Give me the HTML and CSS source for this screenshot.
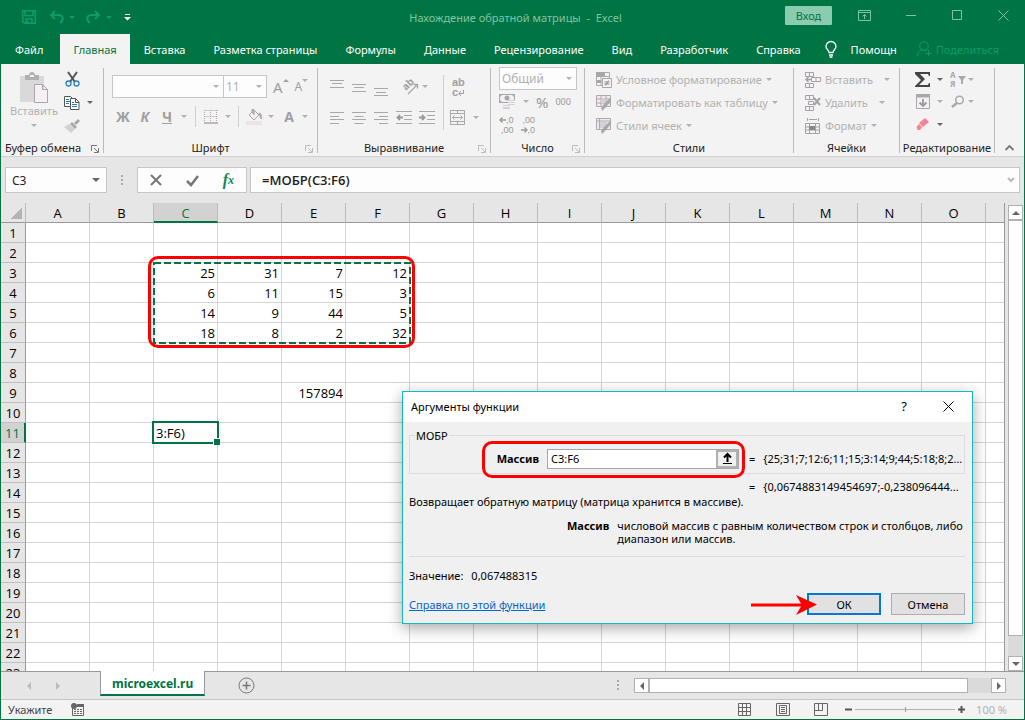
FILE: index.html
```html
<!DOCTYPE html>
<html lang="ru">
<head>
    <meta charset="UTF-8">
    <meta name="viewport" content="width=device-width, initial-scale=1.0">
    <title>Нахождение обратной матрицы - Excel</title>
    <link rel="stylesheet" href="styles.css">
</head>
<body>
    <header class="titlebar">
        <div class="quick-access">
            <button aria-label="Сохранить"><svg width="14" height="14" viewBox="0 0 14 14" fill="none" stroke="currentColor" stroke-width="1.5"><path d="M.75.75h12.500v12.500H2.500l-1.750-1.500zM3 1v4.500h8V1M4 13V9h6v4M6 11v2"/></svg></button>
            <button aria-label="Отменить"><svg width="15" height="14" viewBox="0 0 15 14" fill="none" stroke="currentColor" stroke-width="2"><path d="M6 1L2 5l4 4M2 5h7c6 0 6 5 2 8"/></svg></button>
            <span class="caret"></span>
            <button class="redo" aria-label="Вернуть"><svg width="15" height="14" viewBox="0 0 15 14" fill="none" stroke="currentColor" stroke-width="2"><path d="M9 1l4 4-4 4M13 5H6C0 5 0 10 4 13"/></svg></button>
            <span class="caret"></span>
            <button class="customize" aria-label="Настройка панели"><svg width="7" height="7" viewBox="0 0 7 7" fill="#fff"><path d="M1 0h5v1H1zM0 3h7L3.500 6.500z"/></svg></button>
        </div>
        <div class="doc-title">Нахождение обратной матрицы&nbsp; -&nbsp; Excel</div>
        <div class="window-buttons">
            <button class="login">Вход</button>
            <button aria-label="Параметры ленты"><svg width="13" height="11" viewBox="0 0 13 11" fill="none" stroke="currentColor"><path d="M.5.5h12v10H.5zM.5 2.500h12M6.500 9V4.500M4.500 6.500l2-2 2 2"/></svg></button>
            <button aria-label="Свернуть"><svg width="11" height="11" viewBox="0 0 11 11" stroke="currentColor"><path d="M0 5.500h10"/></svg></button>
            <button aria-label="Развернуть"><svg width="11" height="11" viewBox="0 0 11 11" fill="none" stroke="currentColor"><path d="M.5.5h9v9h-9z"/></svg></button>
            <button aria-label="Закрыть"><svg width="11" height="11" viewBox="0 0 11 11" stroke="currentColor"><path d="M.5.5l10 10M10.500.5l-10 10"/></svg></button>
        </div>
    </header>

    <nav class="tabs">
        <a href="#">Файл</a>
        <a href="#" class="active">Главная</a>
        <a href="#">Вставка</a>
        <a href="#">Разметка страницы</a>
        <a href="#">Формулы</a>
        <a href="#">Данные</a>
        <a href="#">Рецензирование</a>
        <a href="#">Вид</a>
        <a href="#">Разработчик</a>
        <a href="#">Справка</a>
        <a href="#" class="help"><svg width="12" height="17" viewBox="0 0 12 17" fill="none" stroke="currentColor" stroke-width="1.300"><path d="M4 11.500C4 9 1 8.500 1 5.500a5 5 0 0 1 10 0c0 3-3 3.500-3 6zM4 14h4M4.500 16h3"/></svg>Помощн</a>
        <a href="#" class="share"><svg width="15" height="16" viewBox="0 0 15 16" fill="none" stroke="currentColor"><circle cx="7" cy="5" r="4.200"/><path d="M.5 15.500c0-4 2-6 5-6.500M8 9l2 1M11.500 9v6M8.500 12.500h6"/></svg>Поделиться</a>
    </nav>

    <section class="ribbon">
        <div class="group clipboard">
            <div class="tools">
                <button class="paste">
                    <svg width="30" height="31" viewBox="0 0 30 31"><path d="M1 4h24v26H1z" fill="#d9d9d9"/><path d="M6 3h4c0-4 6-4 6 0h4v5H6z" fill="#b1b1b1"/><path d="M11 3h4v2h-4z" fill="#f3f3f3"/><path d="M15.500 12.500h8l5 5v13h-13zM23.500 12.500v5h5" fill="#f6eff5" stroke="#a9a5a9"/></svg>
                    <span>Вставить</span>
                    <span class="caret"></span>
                </button>
                <div class="stack">
                    <button aria-label="Вырезать"><svg width="15" height="15" viewBox="0 0 15 15" fill="none"><path d="M3 0l7 10M12 0L5 10" stroke="#555" stroke-width="2"/><circle cx="3.500" cy="11.500" r="2.500" stroke="#2b7fb8" stroke-width="1.300"/><circle cx="11.500" cy="11.500" r="2.500" stroke="#2b7fb8" stroke-width="1.300"/></svg></button>
                    <button aria-label="Копировать"><svg width="16" height="14" viewBox="0 0 16 14" fill="#fff" stroke="#555"><path d="M.5.5h6l3 3v7h-9z"/><path d="M2 3.500h3M2 5.500h5M2 7.500h3" stroke="#2b7fb8"/><path d="M6.500 2.500h5l3.500 3.500v7.500H6.500zM11.500 2.500v4H15"/><path d="M8 6.500h2M8 8.500h5M8 10.500h5" stroke="#2b7fb8"/></svg><span class="caret dark"></span></button>
                    <button aria-label="Формат по образцу"><svg width="16" height="14" viewBox="0 0 16 14"><path d="M14 0l2 2-4 4-2-2zM8 3l5 5-2 2-5-5z" fill="#a8a8a8"/><path d="M5 5l6 5-4 4L0 8z" fill="#d2d2d2"/></svg></button>
                </div>
            </div>
            <div class="group-name">Буфер обмена<svg class="launcher dark" width="8" height="8" viewBox="0 0 8 8"><path d="M.5 6V.5H6M7.500 3v4.500H3M3 3l4 4" fill="none" stroke="currentColor"/></svg></div>
        </div>

        <div class="group font">
            <div class="tools">
                <div class="row combos">
                    <label class="combo name"><select aria-label="Шрифт" disabled><option></option></select></label>
                    <label class="combo size"><select aria-label="Размер" disabled><option>11</option></select></label>
                    <button class="letter big">A<i class="up"></i></button>
                    <button class="letter small">A<i class="caret"></i></button>
                </div>
                <div class="row letters">
                    <button class="letter"><b>Ж</b></button>
                    <button class="letter"><b><i>К</i></b></button>
                    <button class="letter"><b><u>Ч</u></b></button>
                    <span class="caret"></span>
                    <span class="divider"></span>
                    <button aria-label="Границы"><svg width="14" height="14" viewBox="0 0 14 14" fill="none" stroke="#b1a8b1"><path d="M.5.5h13M.5 6.500h13M.5 0v13M6.500 0v13M12.500 0v13" stroke-dasharray="1 1"/><path d="M0 13h14" stroke-width="1.500"/></svg></button>
                    <span class="caret"></span>
                    <span class="divider"></span>
                    <button aria-label="Цвет заливки"><svg width="17" height="17" viewBox="0 0 17 17"><path d="M8 2l5 5-5 5-5-5z" fill="#f6eff5" stroke="#a8a8a8"/><path d="M6 5V1.500h2V7M13 5c3 1 3 4 2 6l-1-3z" fill="#b1b1b1" stroke="#a8a8a8"/><path d="M0 13h16v4H0z" fill="#ebe4e6"/></svg></button>
                    <span class="caret"></span>
                    <button class="letter"><b>A</b></button>
                    <span class="caret"></span>
                </div>
            </div>
            <div class="group-name">Шрифт<svg class="launcher" width="8" height="8" viewBox="0 0 8 8"><path d="M.5 6V.5H6M7.500 3v4.500H3M3 3l4 4" fill="none" stroke="currentColor"/></svg></div>
        </div>

        <div class="group align">
            <div class="tools">
                <div class="align-grid">
                    <button aria-label="По верхнему краю"><svg width="14" height="18" viewBox="0 0 14 18" stroke="#a8a8a8"><path d="M0 2.500h14M2 5.500h10M0 9.500h14"/></svg></button>
                    <button aria-label="По середине"><svg width="14" height="18" viewBox="0 0 14 18" stroke="#a8a8a8"><path d="M0 6.500h14M2 9.500h10M0 13.500h14"/></svg></button>
                    <button aria-label="По нижнему краю"><svg width="14" height="18" viewBox="0 0 14 18" stroke="#a8a8a8"><path d="M0 10.500h14M2 14.500h10M0 17.500h14"/></svg></button>
                    <button class="orient" aria-label="Ориентация"><svg width="17" height="18" viewBox="0 0 17 18" fill="none" stroke="#a8a8a8"><text x="4" y="13" transform="rotate(-45 4 13)" font-size="10" font-weight="bold" fill="#a0a0a0" stroke="none">ab</text><path d="M6 16l9-9M11.500 6.500H15.500V10.500" stroke-width="1.300"/></svg><span class="caret"></span></button>
                    <span class="divider tall"></span>
                    <button class="wrap"><span>ab</span><span>c<svg width="6" height="6" viewBox="0 0 6 6"><path d="M5.500 0v3.500H1M3 1L.8 3.500 3 6" fill="none" stroke="currentColor"/></svg></span></button>
                    <button aria-label="По левому краю"><svg width="14" height="12" viewBox="0 0 14 12" stroke="#a8a8a8"><path d="M0 .5h14M0 4.500h9M0 7.500h14M0 11.500h9"/></svg></button>
                    <button aria-label="По центру"><svg width="14" height="12" viewBox="0 0 14 12" stroke="#a8a8a8"><path d="M0 .5h14M2.500 4.500h9M0 7.500h14M2.500 11.500h9"/></svg></button>
                    <button aria-label="По правому краю"><svg width="14" height="12" viewBox="0 0 14 12" stroke="#a8a8a8"><path d="M0 .5h14M5 4.500h9M0 7.500h14M5 11.500h9"/></svg></button>
                    <button aria-label="Уменьшить отступ"><svg width="16" height="13" viewBox="0 0 16 13" stroke="#a8a8a8" fill="none"><path d="M0 .5h16M8 4.500h8M8 8.500h8M0 12.500h16"/><path d="M7 6.500H1.500M4 4L1.500 6.500 4 9" stroke="#999" stroke-width="1.800"/></svg></button>
                    <button aria-label="Увеличить отступ"><svg width="16" height="13" viewBox="0 0 16 13" stroke="#a8a8a8" fill="none"><path d="M0 .5h16M8 4.500h8M8 8.500h8M0 12.500h16"/><path d="M0 6.500h5.500M3 4l2.500 2.500L3 9" stroke="#999" stroke-width="1.800"/></svg></button>
                    <button class="merge" aria-label="Объединить"><svg width="16" height="15" viewBox="0 0 16 15" fill="none" stroke="#a8a8a8"><path d="M.5.5h14v14H.5zM.5 3.500h14M.5 11.500h14M7.500.5v3M7.500 11.500v3M2.500 7.500h10M4.500 5.500l-2 2 2 2M10.500 5.500l2 2-2 2"/></svg><span class="caret"></span></button>
                </div>
            </div>
            <div class="group-name">Выравнивание<svg class="launcher" width="8" height="8" viewBox="0 0 8 8"><path d="M.5 6V.5H6M7.500 3v4.500H3M3 3l4 4" fill="none" stroke="currentColor"/></svg></div>
        </div>

        <div class="group number">
            <div class="tools">
                <label class="combo"><select aria-label="Формат числа" disabled><option>Общий</option></select></label>
                <div class="row">
                    <button aria-label="Денежный формат"><svg width="17" height="15" viewBox="0 0 17 15"><path d="M.5.5h15v8H.5z" fill="#f6eff5" stroke="#a8a8a8"/><path d="M0 0h4L0 4zM16 0h-4l4 4zM0 9V5l4 4z" fill="#a8a8a8"/><circle cx="8" cy="4" r="2.500" fill="#a8a8a8"/><path d="M9 6h7v5H9zM4 11h7v4H4z" fill="#d2d2d2"/><path d="M9 7.500h7M9 9.500h7M4 12.500h7" stroke="#f3f3f3"/></svg></button>
                    <span class="caret"></span>
                    <button class="percent">%</button>
                    <button class="zeros">000</button>
                </div>
                <div class="row">
                    <button class="digits"><span><svg width="7" height="6" viewBox="0 0 7 6"><path d="M7 3H1M3.500.5L1 3l2.500 2.500" fill="none" stroke="currentColor" stroke-width="1.300"/></svg>,0</span><span>,00</span></button>
                    <button class="digits"><span>,00</span><span><svg width="7" height="6" viewBox="0 0 7 6"><path d="M0 3h6M3.500.5L6 3 3.500 5.500" fill="none" stroke="currentColor" stroke-width="1.300"/></svg>,0</span></button>
                </div>
            </div>
            <div class="group-name">Число<svg class="launcher" width="8" height="8" viewBox="0 0 8 8"><path d="M.5 6V.5H6M7.500 3v4.500H3M3 3l4 4" fill="none" stroke="currentColor"/></svg></div>
        </div>

        <div class="group styles">
            <div class="tools list">
                <button><svg width="16" height="16" viewBox="0 0 16 16"><path d="M.5.5h13v13H.5zM.5 4.500h13M.5 9.500h13M5 .5v13" fill="none" stroke="#b1a8b1"/><path d="M0 0h9v5H0zM0 8h5v3H0z" fill="#a8a8a8"/><path d="M6.500 6.500h9v9h-9z" fill="#f8f2f7" stroke="#a8a8a8"/><path d="M8.500 10h5M8.500 12h5M12.500 8.500l-3 5" stroke="#888"/></svg>Условное форматирование<span class="caret"></span></button>
                <button><svg width="16" height="16" viewBox="0 0 16 16"><path d="M.5.5h14v11H.5zM.5 4h14M.5 8h14M5 .5v11M10 .5v11" fill="#f0eaf0" stroke="#b1a8b1"/><path d="M5 4h5v4H5z" fill="#d2d2d2"/><path d="M15 2v4l-5 6-4 4-1-3 3-4z" fill="#a8a8a8"/></svg>Форматировать как таблицу<span class="caret"></span></button>
                <button><svg width="16" height="16" viewBox="0 0 16 16"><path d="M.5.5h14v11H.5zM.5 3h14M3.500 .5v11" fill="#f0eaf0" stroke="#b1a8b1"/><path d="M4 4h7v6H4z" fill="#d2d2d2"/><path d="M15 2v4l-5 6-4 4-1-3 3-4z" fill="#a8a8a8"/></svg>Стили ячеек<span class="caret"></span></button>
            </div>
            <div class="group-name">Стили</div>
        </div>

        <div class="group cells">
            <div class="tools list">
                <button><svg width="16" height="16" viewBox="0 0 16 16" fill="none" stroke="#a8a0a8"><path d="M.5.5h8v4h-8zM4.500.5v4M.5 11.500h8v4h-8zM4.500 11.500v4M6.500 5.500h9v4h-9zM11 5.500v4"/><path d="M6 7.500H1M3.500 5L1 7.500 3.500 10" stroke-width="1.500"/></svg>Вставить<span class="caret far"></span></button>
                <button><svg width="16" height="16" viewBox="0 0 16 16" fill="none" stroke="#a8a0a8"><path d="M.5.5h8v4h-8zM4.500.5v4M.5 11.500h8v4h-8zM4.500 11.500v4M3.500 6.500h5v3h-5z"/><path d="M9 3l6 7M15 3l-6 7" stroke-width="2"/></svg>Удалить<span class="caret far"></span></button>
                <button><svg width="16" height="16" viewBox="0 0 16 16" fill="none" stroke="#a8a0a8"><path d="M2.500 0v3M13.500 0v3M4 1.500h8M.5 5.500h14v10H.5zM.5 9h14M.5 12h14M4.500 5.500v10M10.500 5.500v10"/><path d="M4 8h6v4H4z" fill="#888" stroke="none"/></svg>Формат<span class="caret"></span></button>
            </div>
            <div class="group-name">Ячейки</div>
        </div>

        <div class="group editing">
            <div class="tools">
                <button aria-label="Сумма"><svg width="16" height="15" viewBox="0 0 16 15"><path d="M0 0h15v4h-1l-1-2H5l5 5-6 6h9l1-2h1v4H0v-1l6-6-6-6z" fill="#444"/></svg></button><span class="caret dark"></span>
                <button aria-label="Сортировка"><svg width="16" height="17" viewBox="0 0 16 17"><text x="0" y="7" font-size="8" font-weight="bold" fill="#a8a8a8">А</text><text x="0" y="16" font-size="8" font-weight="bold" fill="#a8a8a8">Я</text><path d="M8 5h8l-3 4v4h-2V9z" fill="#a8a8a8"/></svg></button><span class="caret"></span>
                <button aria-label="Заполнить"><svg width="15" height="15" viewBox="0 0 15 15" fill="none" stroke="#a8a8a8"><path d="M.5.5h13v14H.5z" fill="#f6eff5"/><path d="M0 2h14" stroke-width="3"/><path d="M7 5v7M3.500 8.500L7 12l3.500-3.500" stroke="#999" stroke-width="1.800"/></svg></button><span class="caret"></span>
                <button aria-label="Найти"><svg width="14" height="13" viewBox="0 0 14 13" fill="none" stroke="#a8a8a8"><circle cx="8.500" cy="5" r="3.800" stroke-width="1.500"/><path d="M6 8l-5 4" stroke-width="2.500"/></svg></button><span class="caret"></span>
                <button aria-label="Очистить"><svg width="14" height="13" viewBox="0 0 14 13"><path d="M9 0l4 4-6 5-4-4z" fill="#f88493"/><path d="M3 6l3 3-2 3H1.500L.5 9z" fill="#f88493"/></svg></button><span class="caret dark"></span>
            </div>
            <div class="group-name">Редактирование</div>
        </div>
        <button class="collapse" aria-label="Свернуть ленту"><svg width="9" height="6" viewBox="0 0 9 6"><path d="M.5 5l4-4 4 4" fill="none" stroke="#777" stroke-width="1.800"/></svg></button>
    </section>

    <section class="formula-bar">
        <div class="name-box"><input type="text" value="C3" aria-label="Имя"><span class="caret dark"></span></div>
        <span class="dots"></span>
        <div class="formula-buttons">
            <button aria-label="Отмена"><svg width="12" height="12" viewBox="0 0 12 12"><path d="M1 1l10 10M11 1L1 11" stroke="#777" stroke-width="2"/></svg></button>
            <button aria-label="Ввод"><svg width="13" height="11" viewBox="0 0 13 11"><path d="M1 6l4 4 7-9" fill="none" stroke="#777" stroke-width="2.500"/></svg></button>
            <button class="fx">f<small>x</small></button>
        </div>
        <div class="formula-input"><input type="text" value="=МОБР(C3:F6)" aria-label="Формула"><svg width="8" height="6" viewBox="0 0 8 6"><path d="M1 1l3 3 3-3" fill="none" stroke="#bbb" stroke-width="2"/></svg></div>
    </section>

    <main class="workspace">
        <div class="sheet">
            <table class="cells-table">
                <thead><tr id="columns"><th class="corner"></th></tr></thead>
                <tbody id="rows"></tbody>
            </table>
            <svg class="ants" width="258" height="82" aria-hidden="true"><rect x="1" y="1" width="256" height="80" fill="none" stroke="#0a7044" stroke-width="2" stroke-dasharray="7 3"/></svg>
            <div class="mark range-mark"></div>
            <div class="cell-cursor"></div>
        </div>
        <div class="scroll vertical">
            <button aria-label="Вверх"><i class="up"></i></button>
            <div class="thumb"></div>
            <button aria-label="Вниз"><i class="caret dark"></i></button>
        </div>
    </main>

    <footer class="sheet-bar">
        <div class="sheet-nav"><i class="left"></i><i class="right"></i></div>
        <a href="#" class="sheet-tab">microexcel.ru</a>
        <button class="add" aria-label="Новый лист"><svg width="17" height="17" viewBox="0 0 17 17" fill="none" stroke="#777"><circle cx="8.500" cy="8.500" r="7.500"/><path d="M8.500 4.500v8M4.500 8.500h8" stroke-width="1.500"/></svg></button>
        <span class="dots"></span>
        <div class="scroll horizontal">
            <button aria-label="Влево"><i class="left"></i></button>
            <div class="thumb"></div>
            <button aria-label="Вправо"><i class="right"></i></button>
        </div>
    </footer>

    <footer class="status">
        <span>Укажите</span>
        <svg width="14" height="13" viewBox="0 0 14 13"><path d="M1.500 4v8.500h11V1.500H6" fill="none" stroke="#666"/><path d="M6 1h7v3H6z" fill="#666"/><circle cx="3" cy="3" r="3" fill="#666"/><path d="M3 6.500h9M3 8.500h9M3 10.500h9" stroke="#666" stroke-dasharray="2 1"/></svg>
        <div class="views">
            <button aria-label="Обычный"><svg width="14" height="13" viewBox="0 0 14 13" fill="none" stroke="#666"><path d="M.5.5h12v12H.5zM4.500.5v12M8.500.5v12M.5 4.500h12M.5 8.500h12"/></svg></button>
            <button aria-label="Разметка страницы"><svg width="14" height="13" viewBox="0 0 14 13" fill="none" stroke="#666"><path d="M.5.5h13v12H.5zM3.500 2.500h7v8h-7zM5 4.500h4M5 6.500h4M5 8.500h4"/></svg></button>
            <button aria-label="Страничный режим"><svg width="14" height="13" viewBox="0 0 14 13" fill="none" stroke="#666"><path d="M.5.5h13v12H.5zM4.500.5v7M8.500.5v7M.5 7.500h8"/></svg></button>
        </div>
        <button class="zoom-button" aria-label="Уменьшить"><svg width="7" height="7" viewBox="0 0 7 7"><path d="M0 3.500h7" stroke="#555" stroke-width="2"/></svg></button>
        <input class="zoom" type="range" min="10" max="190" value="100" aria-label="Масштаб">
        <button class="zoom-button" aria-label="Увеличить"><svg width="7" height="7" viewBox="0 0 7 7"><path d="M0 3.500h7M3.500 0v7" stroke="#555" stroke-width="2"/></svg></button>
        <span class="zoom-value">100 %</span>
    </footer>

    <form class="dialog">
        <div class="dialog-title">
            <span>Аргументы функции</span>
            <button type="button">?</button>
            <button type="button" aria-label="Закрыть"><svg width="11" height="11" viewBox="0 0 11 11" stroke="#000"><path d="M.5.5l10 10M10.500.5l-10 10"/></svg></button>
        </div>
        <div class="dialog-body">
            <fieldset>
                <legend>МОБР</legend>
                <div class="argument">
                    <label for="array">Массив</label>
                    <div class="ref-input">
                        <input type="text" id="array" value="C3:F6">
                        <button type="button" aria-label="Свернуть диалог"><svg width="9" height="11" viewBox="0 0 9 11"><path d="M4.500 9V2M1 4.500L4.500 1 8 4.500" fill="none" stroke="#000" stroke-width="2"/><path d="M0 10.500h9" stroke="#000"/></svg></button>
                    </div>
                    <div class="mark field-mark"></div>
                </div>
                <span>=</span>
                <output>{25;31;7;12:6;11;15;3:14;9;44;5:18;8;2...</output>
            </fieldset>
            <div class="result"><span>=</span><output>{0,0674883149454697;-0,238096444...</output></div>
            <p class="about">Возвращает обратную матрицу (матрица хранится в массиве).</p>
            <dl>
                <dt>Массив</dt>
                <dd>числовой массив с равным количеством строк и столбцов, либо диапазон или массив.</dd>
            </dl>
            <p class="value"><span>Значение:</span><output>0,067488315</output></p>
            <div class="dialog-footer">
                <a href="#">Справка по этой функции</a>
                <button type="button" class="ok">ОК<svg class="arrow" width="66" height="20" viewBox="0 0 66 20" aria-hidden="true"><path d="M0 8.500h50L45 0l21 9.500L45 20l5-8.500H0z" fill="#f00"/></svg></button>
                <button type="button">Отмена</button>
            </div>
        </div>
    </form>

    <script>
        const columns = 'ABCDEFGHIJKLMNO'.split('').concat('');
        const values = {
            C3: 25, D3: 31, E3: 7, F3: 12,
            C4: 6, D4: 11, E4: 15, F4: 3,
            C5: 14, D5: 9, E5: 44, F5: 5,
            C6: 18, D6: 8, E6: 2, F6: 32,
            E9: 157894,
            C11: '3:F6)'
        };

        columns.forEach(name => {
            const th = document.createElement('th');
            th.textContent = name;
            if (name === 'C') th.className = 'current';
            if (!name) th.className = 'rest';
            document.getElementById('columns').appendChild(th);
        });

        for (let row = 1; row <= 23; row++) {
            let html = `<th${row === 11 ? ' class="current"' : ''}>${row}</th>`;
            columns.forEach(name => {
                const value = values[name + row];
                html += `<td${isNaN(value) && value ? ' class="text"' : ''}>${value || ''}</td>`;
            });
            const tr = document.createElement('tr');
            tr.innerHTML = html;
            document.getElementById('rows').appendChild(tr);
        }
    </script>
</body>
</html>
```

FILE: styles.css
```css
* {
    box-sizing: border-box;
}
body {
    display: flex;
    flex-direction: column;
    height: 100vh;
    margin: 0;
    border: 1px solid #007443;
    border-top: none;
    overflow: hidden;
    background-color: #e6e6e6;
    font-family: "Noto Sans", "Open Sans", sans-serif;
    font-size: 11px;
    color: #222;
}
button, input, select {
    font: inherit;
    color: inherit;
    margin: 0;
    padding: 0;
    border: none;
    background: none;
}
button {
    display: flex;
    align-items: center;
    justify-content: center;
}
svg {
    display: block;
    flex: none;
    overflow: visible;
}
a {
    color: inherit;
    text-decoration: none;
}
.caret, .up, .left, .right {
    flex: none;
    width: 0;
    height: 0;
    border: 3px solid transparent;
}
.caret {
    border-top-color: #b1b1b1;
    border-bottom: none;
}
.caret.dark {
    border-top-color: #666;
}
.up {
    border-bottom-color: #666;
    border-top: none;
}
.left {
    border-width: 4px;
    border-right-color: #666;
    border-left: none;
}
.right {
    border-width: 4px;
    border-left-color: #666;
    border-right: none;
}
.dots {
    width: 2px;
    height: 11px;
    background: repeating-linear-gradient(#aaa 0 2px, transparent 2px 4px);
}

/* title bar */
.titlebar {
    display: flex;
    align-items: center;
    height: 34px;
    background-color: #007443;
    color: #7fc4a2;
}
.quick-access {
    display: flex;
    flex: 1;
    align-items: center;
    gap: 5px;
    padding-left: 21px;
    color: #0d9b69;
}
.quick-access button:first-child {
    margin-right: 8px;
}
.quick-access .caret {
    border-top-color: #0d9b69;
}
.quick-access .redo {
    margin-left: 6px;
}
.quick-access .customize {
    margin-left: 7px;
}
.window-buttons {
    display: flex;
    flex: 1;
    justify-content: flex-end;
    align-items: center;
    padding-right: 15px;
    padding-bottom: 4px;
}
.window-buttons button + button {
    margin-left: 35px;
}
.window-buttons .login + button {
    margin-left: 26px;
}
.login {
    width: 47px;
    height: 19px;
    border-radius: 1px;
    background-color: #8bcbb0;
    color: #007443;
}

/* ribbon tabs */
.tabs {
    display: flex;
    height: 30px;
    background-color: #007443;
    color: #fff;
    white-space: nowrap;
}
.tabs a {
    display: flex;
    align-items: center;
    padding: 0 14px;
}
.tabs .active {
    margin-left: 3px;
    padding: 0 13px;
    background-color: #f3f3f3;
    color: #007443;
}
.tabs .help {
    gap: 14px;
    padding: 0 10px;
}
.tabs .share {
    gap: 4px;
    padding: 0 10px;
    color: #0d9b69;
}

/* ribbon */
.ribbon {
    display: flex;
    height: 93px;
    padding: 4px 0 3px;
    border-bottom: 1px solid #d0d0d0;
    background-color: #f3f3f3;
    color: #b1b1b1;
}
.group {
    display: flex;
    flex-direction: column;
    flex: none;
    border-right: 1px solid #bababa;
    white-space: nowrap;
}
.tools {
    flex: 1;
}
.group-name {
    display: flex;
    align-items: center;
    justify-content: center;
    position: relative;
    height: 12px;
    color: #222;
}
.launcher {
    position: absolute;
    right: 4px;
    bottom: 0;
    color: #bbb;
}
.launcher.dark {
    color: #777;
}
.row {
    display: flex;
    align-items: center;
}
.combo {
    position: relative;
    display: block;
    height: 23px;
    border: 1px solid #c6c6c6;
    background-color: #fdfdfd;
}
.combo select {
    appearance: none;
    width: 100%;
    height: 100%;
    padding-left: 2px;
    opacity: 1;
    font-size: 12px;
    color: #b1b1b1;
}
.combo::after {
    content: "";
    position: absolute;
    right: 4px;
    top: 9px;
    border: 3px solid transparent;
    border-top-color: #b1b1b1;
    border-bottom: none;
}
.clipboard {
    width: 103px;
}
.clipboard .tools {
    display: flex;
}
.clipboard .group-name {
    padding-right: 18px;
}
.paste {
    flex-direction: column;
    justify-content: flex-start;
    width: 60px;
    margin-left: 3px;
    padding-top: 4px;
}
.paste .caret {
    margin-top: 6px;
}
.stack button {
    gap: 7px;
    height: 23px;
}
.stack button:first-child {
    margin-left: 1px;
}
.stack button {
    justify-content: flex-start;
}
.font {
    width: 214px;
}
.combos {
    padding: 7px 0 0 8px;
}
.combo.name {
    width: 112px;
}
.combo.size {
    width: 43px;
    border-left: none;
}
.letter {
    color: #a0a0a0;
}
.letter.big, .letter.small {
    align-items: flex-start;
    margin-left: 6px;
    font-size: 15px;
    line-height: 20px;
}
.letter.big .up {
    border-bottom-color: #a0a0a0;
}
.letter.small {
    font-size: 12px;
}
.letter .up, .letter .caret {
    margin-top: 2px;
}
.letters {
    display: grid;
    grid-template-columns: 22px 22px 22px 12px 10px 22px 12px 8px 24px 10px 26px 6px;
    justify-items: center;
    padding: 8px 0 0 8px;
}
.letters .letter {
    font-size: 14px;
}
.divider {
    width: 1px;
    height: 21px;
    background-color: #cfcfcf;
}
.divider.tall {
    height: 55px;
    grid-row: span 2;
}
.align {
    width: 173px;
}
.align-grid {
    display: grid;
    grid-template-columns: 22px 22px 22px 24px 22px 10px 34px;
    grid-template-rows: 31px 31px;
    align-items: center;
    justify-items: center;
    padding: 3px 0 0 8px;
}
.orient {
    grid-column: span 2;
    gap: 3px;
}
.wrap, .merge {
    gap: 7px;
    justify-self: start;
    margin-left: 2px;
}
.wrap {
    flex-direction: column;
    gap: 0;
    align-items: flex-start;
    margin-left: 4px;
    font-family: "Liberation Sans", sans-serif;
    line-height: 10px;
    font-weight: bold;
    color: #a0a0a0;
}
.wrap svg, .digits svg {
    display: inline-block;
}
.number {
    width: 94px;
}
.number .tools {
    padding-left: 8px;
}
.number .combo {
    width: 78px;
    margin-top: -1px;
}
.number .row {
    height: 23px;
    gap: 7px;
}
.percent {
    font-size: 15px;
    color: #999;
}
.zeros {
    font-size: 9px;
    color: #999;
}
.digits {
    flex-direction: column;
    align-items: flex-end;
    font-family: "Liberation Sans", sans-serif;
    font-size: 9px;
    line-height: 10px;
    color: #999;
}
.list button {
    gap: 4px;
    height: 23px;
}
.styles {
    width: 209px;
}
.styles .tools {
    padding-left: 11px;
}
.cells {
    width: 106px;
}
.cells .tools {
    padding-left: 11px;
}
.caret.far {
    margin-left: 7px;
}
.editing {
    width: 95px;
}
.editing .tools {
    display: grid;
    grid-template-columns: 18px 16px 20px 6px;
    grid-template-rows: 22px 23px 23px;
    align-items: center;
    justify-items: center;
    align-content: start;
    padding-left: 14px;
}
.collapse {
    flex: 1;
    align-items: flex-end;
    padding-bottom: 2px;
}

/* formula bar */
.formula-bar {
    display: flex;
    align-items: center;
    padding: 10px 4px;
}
.name-box, .formula-buttons, .formula-input {
    display: flex;
    align-items: center;
    height: 26px;
    border: 1px solid #c6c6c6;
    background-color: #fdfdfd;
}
.name-box {
    width: 102px;
    padding: 0 6px;
}
.name-box input {
    flex: 1;
    min-width: 0;
    font-size: 12px;
}
.name-box .caret {
    border-width: 4px 4px 0;
}
.formula-bar .dots {
    margin: 0 14px;
}
.formula-buttons {
    width: 110px;
    justify-content: space-around;
}
.fx {
    font: italic bold 16px "Liberation Serif", serif;
    color: #0d8a5c;
}
.fx small {
    font-size: 12px;
}
.formula-input {
    flex: 1;
    margin-left: 3px;
    padding: 0 4px 0 11px;
}
.formula-input input {
    flex: 1;
    font-family: "Open Sans", "Noto Sans", sans-serif;
    font-size: 13px;
    font-weight: 600;
}

/* sheet */
.workspace {
    display: flex;
    flex: 1;
    min-height: 0;
    gap: 3px;
}
.sheet {
    position: relative;
    flex: 1;
    overflow: hidden;
    border-right: 1px solid #999;
}
.cells-table {
    width: 100%;
    table-layout: fixed;
    border-collapse: separate;
    border-spacing: 0;
    font-family: "Open Sans", "Noto Sans", sans-serif;
    color: #000;
}
.cells-table th, .cells-table td {
    height: 20px;
    padding: 2px 2px 0;
    border-right: 1px solid #d4d4d4;
    border-bottom: 1px solid #d4d4d4;
    font-size: 13px;
    line-height: 17px;
    font-weight: normal;
}
.cells-table td {
    background-color: #fff;
    text-align: right;
    white-space: nowrap;
}
.cells-table td.text {
    text-align: left;
}
.cells-table th {
    width: 64px;
    background-color: #e6e6e6;
    border-right-color: #bbb;
    border-bottom-color: #999;
}
.cells-table .corner {
    width: 25px;
    background: linear-gradient(135deg, transparent 50%, #b4b4b4 50%) 9px 4px / 12px 12px no-repeat #e6e6e6;
}
.cells-table .rest {
    width: auto;
    border-right: none;
}
.cells-table tbody th {
    border-right-color: #999;
    border-bottom-color: #c0c0c0;
}
.cells-table td:last-child {
    border-right: none;
}
.cells-table .current {
    background-color: #d2d2d2;
    color: #007443;
}
.cells-table thead .current {
    border-bottom: 2px solid #007443;
    line-height: 16px;
}
.cells-table tbody .current {
    border-right: 2px solid #007443;
}
.ants {
    position: absolute;
    left: 152px;
    top: 59px;
}
.mark {
    position: absolute;
    border: 3px solid #f00;
    border-radius: 10px;
    pointer-events: none;
}
.range-mark {
    left: 147px;
    top: 53px;
    width: 267px;
    height: 92px;
}
.cell-cursor {
    position: absolute;
    left: 151px;
    top: 218px;
    width: 67px;
    height: 23px;
    border: 2px solid #007443;
}
.cell-cursor::after {
    content: "";
    position: absolute;
    right: -3px;
    bottom: -3px;
    width: 6px;
    height: 6px;
    border: 1px solid #fff;
    border-width: 1px 0 0 1px;
    background-color: #007443;
}
.scroll {
    display: flex;
    background-color: #dadada;
}
.scroll button, .scroll .thumb {
    border: 1px solid #b1b1b1;
    background-color: #fff;
}
.scroll button {
    flex: none;
    width: 15px;
    height: 15px;
}
.vertical {
    flex-direction: column;
    justify-content: space-between;
    margin: 2px 1px 0 0;
}
.vertical .up, .vertical .caret {
    border-width: 4px;
}
.vertical .up {
    border-top: none;
}
.vertical .caret {
    border-bottom: none;
}
.vertical .thumb {
    flex: 1;
    margin-bottom: 20px;
}

/* sheet tabs */
.sheet-bar {
    display: flex;
    align-items: center;
    height: 28px;
    padding-right: 18px;
    border-top: 1px solid #999;
}
.sheet-nav {
    display: flex;
    justify-content: space-between;
    width: 99px;
    padding: 0 40px 0 26px;
}
.sheet-nav .left {
    border-right-color: #bbb;
}
.sheet-nav .right {
    border-left-color: #bbb;
}
.sheet-tab {
    align-self: flex-start;
    height: 25px;
    margin-top: -1px;
    padding: 0 11px;
    border: 1px solid #999;
    border-width: 0 1px;
    border-bottom: 2px solid #007443;
    background-color: #fff;
    color: #007443;
    font-size: 12px;
    line-height: 26px;
    font-weight: bold;
}
.add {
    margin: 0 auto 0 33px;
}
.horizontal {
    width: 37%;
    margin-left: 15px;
}
.horizontal .thumb {
    flex: 1;
    margin-right: 23px;
}

/* status bar */
.status {
    display: flex;
    align-items: center;
    height: 20px;
    padding: 0 17px 0 7px;
    border-top: 1px solid #c6c6c6;
    background-color: #f3f3f3;
    color: #444;
}
.status > svg {
    margin-left: 19px;
}
.views {
    display: flex;
    gap: 24px;
    margin-left: auto;
    margin-right: 17px;
}
.zoom {
    appearance: none;
    width: 100px;
    height: 5px;
    margin: 0 3px;
    background: linear-gradient(#b1b1b1, #b1b1b1) center / 100% 1px no-repeat;
}
.zoom::-webkit-slider-thumb {
    appearance: none;
    width: 1px;
    height: 5px;
    background-color: #999;
}
.zoom-value {
    margin-left: 11px;
    color: #b1b1b1;
}

/* function arguments dialog */
.dialog {
    position: absolute;
    left: 402px;
    top: 391px;
    width: 571px;
    border: 1px solid #14b9c0;
    background-color: #f0f0f0;
    box-shadow: 0 4px 14px rgba(0,0,0,0.35);
    line-height: 13px;
    color: #000;
}
.dialog-title {
    display: flex;
    align-items: center;
    height: 30px;
    padding: 0 18px 2px 8px;
    background-color: #fff;
}
.dialog-title span {
    flex: 1;
}
.dialog-title button {
    margin-left: 36px;
    font-size: 13px;
}
.dialog-body {
    padding: 7px 7px 8px 6px;
}
.dialog fieldset {
    display: flex;
    align-items: center;
    min-width: 0;
    height: 45px;
    margin: 0;
    padding: 2px 0 0;
    border: 1px solid #dcdcdc;
}
.dialog legend {
    margin-left: 5px;
    padding: 0 1px;
}
.argument {
    display: flex;
    position: relative;
    align-items: center;
    justify-content: flex-end;
    gap: 8px;
    width: 329px;
    margin-right: 10px;
    font-weight: bold;
}
.ref-input {
    display: flex;
    width: 192px;
    height: 20px;
    border: 1px solid #a5a7ae;
    background-color: #fff;
    font-weight: normal;
}
.ref-input input {
    flex: 1;
    min-width: 0;
    padding-left: 3px;
}
.ref-input button {
    width: 22px;
    border: 2px solid #b1b1b1;
    background-color: #f0f0f0;
}
.field-mark {
    right: -6px;
    top: -8px;
    width: 263px;
    height: 37px;
}
.dialog output {
    margin-left: 8px;
}
.result {
    display: flex;
    margin: 6px 0 0 340px;
}
.dialog p {
    margin: 0;
}
.dialog .about {
    margin-top: 2px;
}
.dialog dl {
    display: flex;
    gap: 8px;
    margin: 11px 0;
    padding-left: 158px;
}
.dialog dt {
    font-weight: bold;
}
.dialog dd {
    flex: 1;
    margin: 0;
}
.dialog .value {
    padding-top: 12px;
    border-top: 1px solid #dcdcdc;
}
.dialog-footer {
    display: flex;
    align-items: center;
    gap: 10px;
    margin-top: 11px;
}
.dialog-footer a {
    flex: 1;
    color: #0066cc;
    text-decoration: underline;
}
.dialog-footer button {
    position: relative;
    width: 74px;
    height: 22px;
    border: 1px solid #adadad;
    background-color: #e1e1e1;
}
.dialog-footer .ok {
    border: 2px solid #0078d7;
}
.arrow {
    position: absolute;
    right: 62px;
    top: 0;
}
```
